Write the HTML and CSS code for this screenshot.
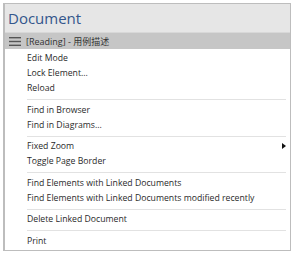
FILE: index.html
```html
<!DOCTYPE html>
<html lang="en">
<head>
    <meta charset="UTF-8">
    <title>Document</title>
    <link rel="stylesheet" href="styles.css">
</head>
<body>
    <div class="panel">
        <div class="title">Document</div>
        <div class="bar">
            <svg class="burger" width="12" height="9" viewBox="0 0 12 9">
                <rect x="0" y="0" width="12" height="1.4" fill="#555"/>
                <rect x="0" y="3.8" width="12" height="1.4" fill="#555"/>
                <rect x="0" y="7.6" width="12" height="1.4" fill="#555"/>
            </svg>
            <span>[Reading] - 用例描述</span>
        </div>
        <ul class="menu">
            <li>Edit Mode</li>
            <li>Lock Element...</li>
            <li>Reload</li>
            <li class="sep"></li>
            <li>Find in Browser</li>
            <li>Find in Diagrams...</li>
            <li class="sep"></li>
            <li class="sub">Fixed Zoom</li>
            <li>Toggle Page Border</li>
            <li class="sep"></li>
            <li>Find Elements with Linked Documents</li>
            <li>Find Elements with Linked Documents modified recently</li>
            <li class="sep"></li>
            <li>Delete Linked Document</li>
            <li class="sep"></li>
            <li>Print</li>
        </ul>
    </div>
</body>
</html>
```

FILE: styles.css
```css
body {
    margin: 0;
    padding: 3px 3px 0 3px;
    background-color: white;
    font-family: "Open Sans", "Noto Sans CJK SC", sans-serif;
}

.panel {
    width: 285px;
    border: 1px solid #bdbdbd;
    border-left-width: 2px;
    background-color: white;
}

.title {
    background-color: #e6e6e6;
    height: 28px;
    line-height: 28px;
    padding-left: 3px;
    font-size: 15px;
    color: #34568c;
}

.bar {
    background-color: #c6c6c6;
    height: 16px;
    display: flex;
    align-items: center;
    gap: 5px;
    padding-left: 4px;
    font-size: 9px;
    color: #333;
    border-top: 1px solid #d8d8d8;
}

.burger {
    display: block;
}

.menu {
    list-style: none;
    margin: 0;
    padding: 2px 0 1px 0;
}

.menu li {
    height: 15px;
    line-height: 15px;
    padding-left: 22px;
    font-size: 8.7px;
    color: #2a2a2a;
    position: relative;
}

.menu li.sep {
    height: 0;
    border-top: 1px solid #e2e2e2;
    margin: 3px 4px 2.5px 22px;
    padding: 0;
}

.menu li.sub::after {
    content: "";
    position: absolute;
    right: 4px;
    top: 4px;
    border-left: 4px solid #111;
    border-top: 3.5px solid transparent;
    border-bottom: 3.5px solid transparent;
}
```
